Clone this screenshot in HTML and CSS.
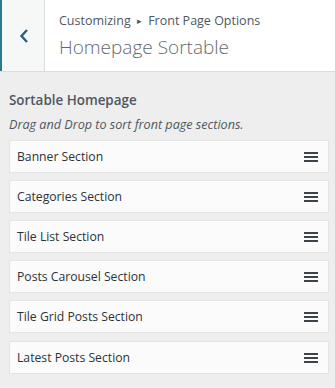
FILE: index.html
```html
<!DOCTYPE html>
<html lang="en">
  <head>
    <meta charset="UTF-8" />
    <title>Homepage Sortable</title>
    <link rel="stylesheet" href="styles.css">
  </head>
  <body>
    <div class="header">
      <button class="back" type="button">
        <svg width="10" height="14" viewBox="0 0 10 14">
          <path d="M8 1 L2.5 7 L8 13" fill="none" stroke="#2b5f7c" stroke-width="2.4" />
        </svg>
      </button>
      <div class="title">
        <span class="crumbs">Customizing <span class="sep">&#9656;</span> Front Page Options</span>
        <h2>Homepage Sortable</h2>
      </div>
    </div>

    <div class="control">
      <span class="label">Sortable Homepage</span>
      <span class="desc">Drag and Drop to sort front page sections.</span>
      <ul class="sortable">
        <li>Banner Section <i class="handle"></i></li>
        <li>Categories Section <i class="handle"></i></li>
        <li>Tile List Section <i class="handle"></i></li>
        <li>Posts Carousel Section <i class="handle"></i></li>
        <li>Tile Grid Posts Section <i class="handle"></i></li>
        <li class="last">Latest Posts Section <i class="handle"></i></li>
      </ul>
    </div>
  </body>
</html>
```

FILE: styles.css
```css
body {
  margin: 0;
  background-color: #eeeeee;
  font-family: "Open Sans", sans-serif;
  color: #3c434a;
}

.header {
  display: flex;
  height: 71px;
  background-color: #ffffff;
  border-bottom: 1px solid #dcdcde;
}

.back {
  width: 45px;
  padding: 0 0 0 1px;
  border: none;
  border-left: 2px solid #2a7a94;
  border-right: 1px solid #dcdcde;
  background-color: #f6f7f7;
  display: flex;
  align-items: center;
  justify-content: center;
}

.title {
  padding: 12px 14px;
}

.crumbs {
  display: block;
  font-size: 12.5px;
  color: #50575e;
  line-height: 18px;
}

.sep {
  font-size: 9px;
  padding: 0 3px;
  vertical-align: 1px;
}

.title h2 {
  margin: 5px 0 0;
  font-size: 19px;
  font-weight: 300;
  color: #646970;
  line-height: 24px;
}

.control {
  padding: 18px 6px 0 9px;
}

.label {
  display: block;
  font-size: 13.4px;
  font-weight: 600;
  color: #50575e;
  line-height: 20px;
}

.desc {
  display: block;
  margin-top: 7px;
  font-size: 12.6px;
  font-style: italic;
  color: #50575e;
  line-height: 16px;
}

.sortable {
  list-style: none;
  margin: 7px 0 0;
  padding: 0;
  display: flex;
  flex-direction: column;
  gap: 7px;
}

.sortable li {
  display: flex;
  align-items: center;
  justify-content: space-between;
  height: 31px;
  padding: 0 10px 0 7px;
  background-color: #fbfbfb;
  border: 1px solid #e4e4e4;
  font-size: 12.2px;
  color: #2c3338;
}

.sortable li.last {
  margin-top: 1px;
}

.handle {
  width: 14px;
  height: 10px;
  background: linear-gradient(#3c434a 0 2px, transparent 2px 4px, #3c434a 4px 6px, transparent 6px 8px, #3c434a 8px 10px);
}
```
